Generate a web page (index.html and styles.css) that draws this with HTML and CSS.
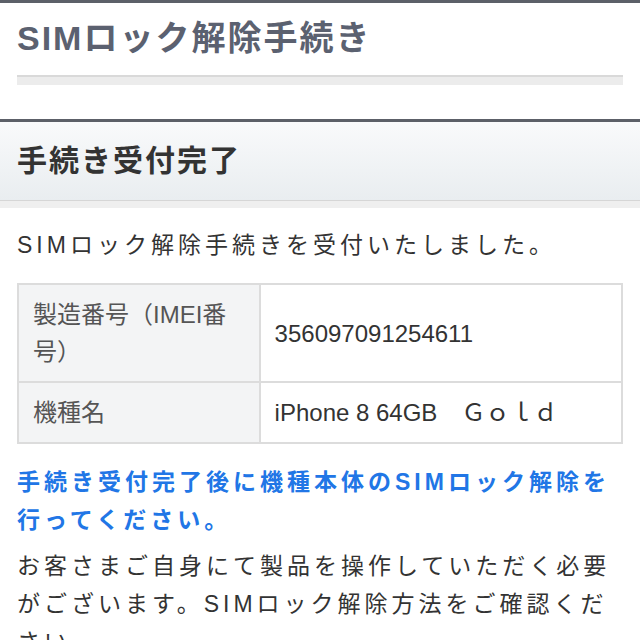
FILE: index.html
```html
<!DOCTYPE html>
<html lang="ja">
<head>
  <meta charset="UTF-8">
  <meta name="viewport" content="width=device-width, initial-scale=1.0">
  <title>SIMロック解除手続き</title>
  <link rel="stylesheet" href="styles.css">
</head>
<body>
  <header class="page-title">
    <h1>SIMロック解除手続き</h1>
    <div class="title-rule"></div>
  </header>

  <section class="result">
    <h2 class="section-head">手続き受付完了</h2>

    <div class="section-body">
      <p class="lead">SIMロック解除手続きを受付いたしました。</p>

      <table class="info-table">
        <colgroup>
          <col class="col-label">
          <col>
        </colgroup>
        <tr>
          <th>製造番号（IMEI番号）</th>
          <td>356097091254611</td>
        </tr>
        <tr>
          <th>機種名</th>
          <td>iPhone 8 64GB　Ｇｏｌｄ</td>
        </tr>
      </table>

      <p class="notice">手続き受付完了後に機種本体のSIMロック解除を行ってください。</p>
      <p class="detail">お客さまご自身にて製品を操作していただく必要がございます。SIMロック解除方法をご確認ください。</p>
    </div>
  </section>
</body>
</html>
```

FILE: styles.css
```css
body {
  margin: 0;
  background: #fff;
  color: #333;
  font-family: 'Liberation Sans', 'Noto Sans CJK JP', sans-serif;
}

/* ページタイトル */
.page-title {
  border-top: 3px solid #5c6068;
  padding: 15px 17px 0;
}
.page-title h1 {
  margin: 0;
  font-size: 34px;
  line-height: 40px;
  letter-spacing: 2px;
  font-weight: bold;
  color: #5b6170;
}
.title-rule {
  margin-top: 17px;
  height: 8px;
  border-top: 2px solid #d9d9d9;
  background: #ececec;
}

/* 見出し */
.section-head {
  margin: 34px 0 0;
  padding: 19px 17px;
  border-top: 3px solid #5c6068;
  border-bottom: 1px solid #d6d6d6;
  background: linear-gradient(#f9fafb, #e9edf0);
  box-shadow: 0 7px 0 #efefef;
  font-size: 30px;
  line-height: 40px;
  letter-spacing: 2px;
  font-weight: bold;
  color: #333;
}

.section-body {
  padding: 0 17px;
  font-size: 23px;
  line-height: 38px;
  letter-spacing: 4px;
}
.lead {
  margin: 25px 0 0;
}

/* 受付内容 */
.info-table {
  width: 100%;
  margin-top: 19px;
  border-collapse: collapse;
  table-layout: fixed;
  border: 2px solid #dcdcdc;
  font-size: 24px;
  line-height: 37px;
  letter-spacing: 0;
}
.col-label {
  width: 40%;
}
.info-table th,
.info-table td {
  border: 2px solid #dcdcdc;
  padding: 11px 14px;
  text-align: left;
  vertical-align: middle;
}
.info-table th {
  background: #f3f4f5;
  color: #555;
  font-weight: normal;
}
.info-table td {
  color: #333;
}

.notice {
  margin: 19px 0 0;
  color: #2176e6;
  font-weight: bold;
}
.detail {
  margin: 8px 0 0;
}
```
